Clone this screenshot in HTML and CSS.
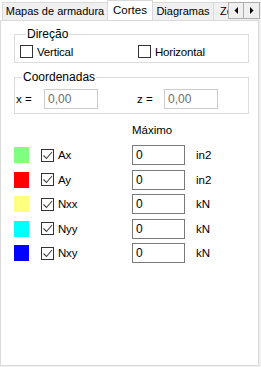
FILE: index.html
```html
<!DOCTYPE html>
<html lang="pt">
<head>
    <meta charset="UTF-8">
    <meta name="viewport" content="width=device-width, initial-scale=1.0">
    <title>Cortes</title>
    <link rel="stylesheet" href="styles.css">
</head>
<body>

<div class="window">
    <div class="tabs">
        <div class="tab tab-maps">Mapas de armadura</div>
        <div class="tab tab-cuts active">Cortes</div>
        <div class="tab tab-diagrams">Diagramas</div>
        <div class="tab tab-zones">Zonas</div>
        <div class="scroller">
            <span class="arrow">
                <svg width="5" height="7" viewBox="0 0 5 7"><path d="M4 0v7L0.5 3.5z" fill="#000"/></svg>
            </span>
            <span class="arrow">
                <svg width="5" height="7" viewBox="0 0 5 7"><path d="M1 0v7l3.5-3.5z" fill="#000"/></svg>
            </span>
        </div>
    </div>

    <div class="pane">
        <fieldset class="group group-dir">
            <legend>Direção</legend>
            <div class="options">
                <label class="check"><span class="box"></span>Vertical</label>
                <label class="check"><span class="box"></span>Horizontal</label>
            </div>
        </fieldset>

        <fieldset class="group group-coord">
            <legend>Coordenadas</legend>
            <div class="coords">
                <span class="coord-label">x =</span>
                <input class="field field-off" type="text" value="0,00" disabled>
                <span class="coord-label coord-z">z =</span>
                <input class="field field-off" type="text" value="0,00" disabled>
            </div>
        </fieldset>

        <div class="max-head">Máximo</div>

        <div class="rows">
            <div class="row">
                <span class="swatch sw-ax"></span>
                <label class="check check-row"><span class="box on"><svg width="11" height="11" viewBox="0 0 11 11"><path d="M1.5 5.5l3 3 5.5-6.5" fill="none" stroke="#444" stroke-width="1.1"/></svg></span>Ax</label>
                <input class="field" type="text" value="0">
                <span class="unit">in2</span>
            </div>
            <div class="row">
                <span class="swatch sw-ay"></span>
                <label class="check check-row"><span class="box on"><svg width="11" height="11" viewBox="0 0 11 11"><path d="M1.5 5.5l3 3 5.5-6.5" fill="none" stroke="#444" stroke-width="1.1"/></svg></span>Ay</label>
                <input class="field" type="text" value="0">
                <span class="unit">in2</span>
            </div>
            <div class="row">
                <span class="swatch sw-nxx"></span>
                <label class="check check-row"><span class="box on"><svg width="11" height="11" viewBox="0 0 11 11"><path d="M1.5 5.5l3 3 5.5-6.5" fill="none" stroke="#444" stroke-width="1.1"/></svg></span>Nxx</label>
                <input class="field" type="text" value="0">
                <span class="unit">kN</span>
            </div>
            <div class="row">
                <span class="swatch sw-nyy"></span>
                <label class="check check-row"><span class="box on"><svg width="11" height="11" viewBox="0 0 11 11"><path d="M1.5 5.5l3 3 5.5-6.5" fill="none" stroke="#444" stroke-width="1.1"/></svg></span>Nyy</label>
                <input class="field" type="text" value="0">
                <span class="unit">kN</span>
            </div>
            <div class="row">
                <span class="swatch sw-nxy"></span>
                <label class="check check-row"><span class="box on"><svg width="11" height="11" viewBox="0 0 11 11"><path d="M1.5 5.5l3 3 5.5-6.5" fill="none" stroke="#444" stroke-width="1.1"/></svg></span>Nxy</label>
                <input class="field" type="text" value="0">
                <span class="unit">kN</span>
            </div>
        </div>
    </div>
</div>

</body>
</html>
```

FILE: styles.css
```css
body {
    margin: 0;
    padding: 0;
    font-family: "Liberation Sans", Arial, sans-serif;
    font-size: 11.5px;
    color: #000;
    background: #f0f0f0;
}
.window {
    width: 261px;
    height: 367px;
    overflow: hidden;
}
.tabs {
    position: relative;
    display: flex;
    align-items: flex-end;
    height: 20px;
    padding-left: 2px;
    background: #fff;
    overflow: hidden;
}
.tab {
    box-sizing: border-box;
    height: 18px;
    line-height: 16px;
    text-align: center;
    white-space: nowrap;
    background: #f0f0f0;
    border: 1px solid #d9d9d9;
    border-bottom: none;
    margin-right: -1px;
    flex-shrink: 0;
    font-size: 11px;
}
.tab-maps {
    width: 106px;
}
.tab-cuts {
    width: 46px;
}
.tab-diagrams {
    width: 62px;
}
.tab-zones {
    width: 50px;
    text-align: left;
    padding-left: 6px;
}
.tab.active {
    position: relative;
    z-index: 1;
    height: 21px;
    line-height: 18px;
    margin-bottom: -1px;
    background: #fff;
    font-size: 11.5px;
}
.scroller {
    position: absolute;
    right: 1px;
    top: 2px;
    z-index: 2;
    display: flex;
    background: #fff;
}
.arrow {
    box-sizing: border-box;
    width: 16px;
    height: 17px;
    display: flex;
    align-items: center;
    justify-content: center;
    background: #f0f0f0;
    border: 1px solid #adadad;
}
.arrow + .arrow {
    border-left: none;
}
.pane {
    box-sizing: border-box;
    width: 259px;
    height: 346px;
    background: #fff;
    border: 1px solid #d9d9d9;
    padding-top: 6px;
}
.group {
    box-sizing: border-box;
    width: 235px;
    margin: 0 0 0 13px;
    border: 1px solid #dcdcdc;
    min-width: 0;
}
.group legend {
    padding: 0 1px;
    margin-left: 6px;
    line-height: 14px;
    font-size: 12px;
}
.group-dir {
    padding: 2px 5px 2px 5px;
}
.group-coord {
    margin-top: 7px;
    padding: 5px 1px 4px 1px;
}
.options {
    display: grid;
    grid-template-columns: 118px auto;
    height: 17px;
    align-items: center;
}
.check {
    display: flex;
    align-items: center;
    letter-spacing: -0.2px;
}
.box {
    box-sizing: border-box;
    width: 13px;
    height: 13px;
    border: 1px solid #333;
    margin-right: 4px;
    display: flex;
    align-items: center;
    justify-content: center;
    background: #fff;
}
.coords {
    display: flex;
    align-items: center;
}
.coord-label {
    width: 28px;
}
.coord-z {
    margin-left: 39px;
    width: 27px;
}
.field {
    box-sizing: border-box;
    width: 53px;
    height: 20px;
    margin: 0;
    padding: 0 3px;
    border: 1px solid #7a7a7a;
    font-family: "Liberation Sans", Arial, sans-serif;
    font-size: 12px;
    color: #000;
    background: #fff;
    outline: none;
}
.field-off {
    width: 54px;
    border-color: #ccc;
    color: #6d6d6d;
}
.max-head {
    margin: 9px 0 0 131px;
    line-height: 14px;
}
.rows {
    display: flex;
    flex-direction: column;
    gap: 4.5px;
    margin-top: 8px;
    padding-left: 13px;
}
.row {
    display: flex;
    align-items: center;
    height: 20px;
}
.swatch {
    width: 15px;
    height: 16px;
    margin-right: 12px;
}
.sw-ax { background: #80ff80; }
.sw-ay { background: #ff0000; }
.sw-nxx { background: #ffff80; }
.sw-nyy { background: #00ffff; }
.sw-nxy { background: #0000ff; }
.check-row {
    width: 91px;
}
.unit {
    margin-left: 11px;
}
```
